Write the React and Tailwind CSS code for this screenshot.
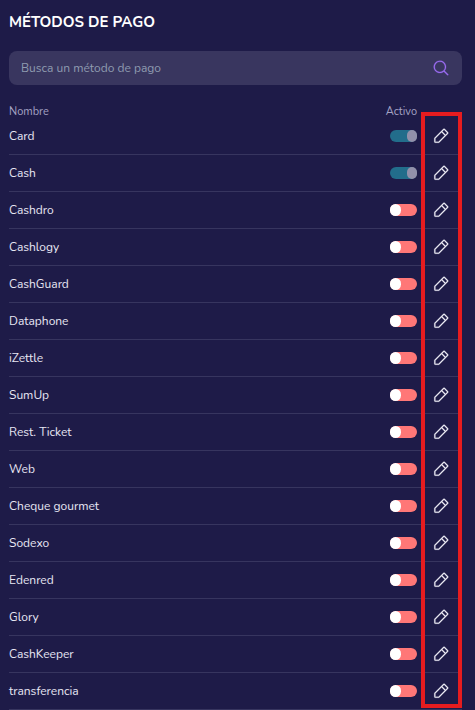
import React, { useState } from "react";
import { PiMagnifyingGlass, PiPencilSimple } from "react-icons/pi";

const METHODS = [
  { name: "Card", active: true, locked: true },
  { name: "Cash", active: true, locked: true },
  { name: "Cashdro" },
  { name: "Cashlogy" },
  { name: "CashGuard" },
  { name: "Dataphone" },
  { name: "iZettle" },
  { name: "SumUp" },
  { name: "Rest. Ticket" },
  { name: "Web" },
  { name: "Cheque gourmet" },
  { name: "Sodexo" },
  { name: "Edenred" },
  { name: "Glory" },
  { name: "CashKeeper" },
  { name: "transferencia" },
];

function Toggle({ label, defaultChecked, disabled }) {
  return (
    <input
      type="checkbox"
      role="switch"
      aria-label={label}
      defaultChecked={defaultChecked}
      disabled={disabled}
      className="flex h-3 w-[27px] appearance-none items-center rounded-full bg-[#ff7777] before:h-3 before:w-[11px] before:rounded-full before:bg-white checked:justify-end checked:bg-[#22a5b4] disabled:bg-[#226d8b] disabled:before:w-[10px] disabled:before:bg-[#9290aa]"
    />
  );
}

function MethodRow({ method }) {
  return (
    <tr className="h-[37px]">
      <td className="border-b border-[#37355f] p-0 text-[12px] leading-5 text-[#e8e7f4]">
        {method.name}
      </td>
      <td className="w-10 border-b border-[#37355f] p-0 pr-1">
        <div className="flex justify-end">
          <Toggle
            label={`Activar ${method.name}`}
            defaultChecked={Boolean(method.active)}
            disabled={Boolean(method.locked)}
          />
        </div>
      </td>
      <td className="w-[41px] border-b border-[#37355f] p-0 pl-[11px]">
        <button
          type="button"
          aria-label={`Editar ${method.name}`}
          className="block cursor-pointer text-[#f1f0f8]"
        >
          <PiPencilSimple className="size-[18px]" stroke="currentColor" strokeWidth="3" />
        </button>
      </td>
    </tr>
  );
}

export default function App() {
  const [query, setQuery] = useState("");
  const visible = METHODS.filter((m) =>
    m.name.toLowerCase().includes(query.toLowerCase())
  );

  return (
    <main className="min-h-screen bg-[#1e1b48] pr-[13px] pl-[9px] font-[Nunito,'Noto_Sans',sans-serif]">
      <h1 className="pt-3 text-[15px] leading-5 font-bold text-white">
        MÉTODOS DE PAGO
      </h1>

      {/* Search */}
      <div className="mt-[19px] flex h-[34px] items-center rounded-lg bg-[#39365f] px-3">
        <input
          type="text"
          aria-label="Busca un método de pago"
          placeholder="Busca un método de pago"
          value={query}
          onChange={(e) => setQuery(e.target.value)}
          className="h-5 min-w-0 flex-1 bg-transparent text-[12px] text-white outline-none placeholder:text-[#8f9bb0]"
        />
        <button type="button" aria-label="Buscar" className="text-[#9a6cf0]">
          <PiMagnifyingGlass className="size-[18px]" stroke="currentColor" strokeWidth="3" />
        </button>
      </div>

      {/* Methods list */}
      <div className="relative mt-5">
        <table className="w-full border-separate border-spacing-0">
          <thead>
            <tr className="h-[13px] text-[11px] leading-[13px] text-[#a5a3c4]">
              <th className="p-0 text-left font-normal">Nombre</th>
              <th className="p-0 pr-1 text-right font-normal">Activo</th>
              <th className="p-0" aria-label="Editar" />
            </tr>
          </thead>
          <tbody>
            {visible.map((method) => (
              <MethodRow key={method.name} method={method} />
            ))}
          </tbody>
        </table>

        {/* Highlight around the edit column */}
        <div className="pointer-events-none absolute top-[7px] right-0 bottom-0.5 w-[41px] border-4 border-[#e61c1f]" />
      </div>
    </main>
  );
}
